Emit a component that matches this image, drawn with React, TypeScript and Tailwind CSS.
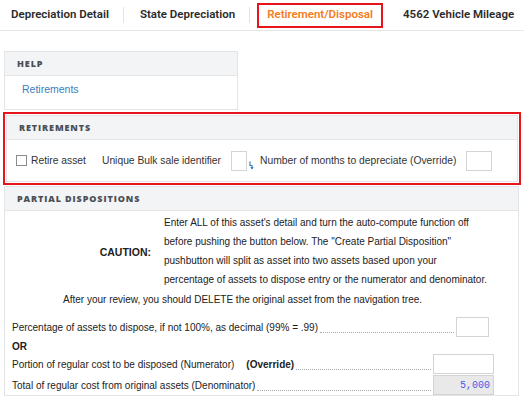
import React from "react";

const arial = { fontFamily: '"Liberation Sans", Arial, sans-serif' };

const PanelHeader = ({ title }: { title: string }) => (
  <div className="flex h-[24px] items-center border-b border-[#e3e4e6] bg-[#f3f4f6] pl-[12px] font-['Open_Sans',sans-serif] text-[9px] font-extrabold tracking-[0.1em] text-[#4a4f55]">
    {title}
  </div>
);

const Leader = () => <div className="mx-[2px] mb-[4px] flex-1 self-end border-b border-dotted border-[#a6abb0]" />;

const Tabs = () => (
  <div className="flex h-[31px] items-center border-b border-[#e6e7e9] font-['Roboto',sans-serif] text-[11.5px] font-semibold text-[#2b2b2b]">
    <span className="pl-[11px]">Depreciation Detail</span>
    <span className="ml-[14px] h-[16px] w-px bg-[#e3e3e3]" />
    <span className="ml-[16px]">State Depreciation</span>
    <span className="ml-[14px] h-[16px] w-px bg-[#e3e3e3]" />
    <span className="ml-[7px] flex h-[25px] items-center border-2 border-[#e8141c] px-[8px] text-[#f47c24]">
      Retirement/Disposal
    </span>
    <span className="ml-[20px]">4562 Vehicle Mileage</span>
  </div>
);

export default function App() {
  return (
    <div className="h-[396px] w-[524px] overflow-hidden bg-white" style={arial}>
      <Tabs />
      <div className="pl-[4px] pr-[4px]">
        <div className="mt-[20px] h-[59px] w-[234px] border border-[#e3e4e6]">
          <PanelHeader title="HELP" />
          <div className="pl-[17px] pt-[6px] text-[10.5px] text-[#3a80c0]">Retirements</div>
        </div>

        <div className="ml-[-1px] mt-[2px] h-[73px] w-[518px] border-2 border-[#e8141c] p-px">
          <div className="h-[67px] border border-[#e3e4e6]">
            <PanelHeader title="RETIREMENTS" />
            <div className="flex h-[41px] items-center text-[10.3px] text-[#333]">
              <span className="ml-[9px] h-[11px] w-[11px] border border-[#8a8a8a] bg-white" />
              <span className="ml-[4px]">Retire asset</span>
              <span className="ml-[16px]">Unique Bulk sale identifier</span>
              <span className="ml-[10px] h-[20px] w-[16px] border border-[#d4d4d4]" />
              <svg className="ml-[2px] mt-[10px]" width="6" height="9" viewBox="0 0 6 9">
                <path d="M1 0.5 V4.5 H3 V8" fill="none" stroke="#3a80c0" strokeWidth="1.2" />
                <path d="M1.3 6 L3 8.6 L4.7 6 Z" fill="#3a80c0" />
              </svg>
              <span className="ml-[5px]">Number of months to depreciate (Override)</span>
              <span className="ml-[10px] h-[20px] w-[26px] border border-[#d4d4d4]" />
            </div>
          </div>
        </div>

        <div className="mt-[1px] w-[515px] border border-[#e3e4e6] text-[10px] text-[#222]">
          <PanelHeader title="PARTIAL DISPOSITIONS" />
          <div className="flex pt-[2px]">
            <div className="flex w-[146px] items-center justify-end pt-[3px] text-[10.5px] font-bold">CAUTION:</div>
            <div className="ml-[13px] leading-[19px]">
              Enter ALL of this asset's detail and turn the auto-compute function off
              <br />
              before pushing the button below. The "Create Partial Disposition"
              <br />
              pushbutton will split as asset into two assets based upon your
              <br />
              percentage of assets to dispose entry or the numerator and denominator.
            </div>
          </div>
          <div className="pl-[58px] pt-[3px]">
            After your review, you should DELETE the original asset from the navigation tree.
          </div>
          <div className="mt-[10px] flex h-[20px] items-center pl-[7px]">
            <span>Percentage of assets to dispose, if not 100%, as decimal (99% = .99)</span>
            <Leader />
            <span className="mr-[29px] h-[20px] w-[33px] border border-[#d4d4d4]" />
          </div>
          <div className="mt-[4px] pl-[7px] font-bold leading-[12px]">OR</div>
          <div className="mt-px flex h-[20px] items-center pl-[7px]">
            <span>Portion of regular cost to be disposed (Numerator)</span>
            <span className="ml-[12px] font-bold">(Override)</span>
            <Leader />
            <span className="mr-[24px] h-[20px] w-[61px] border border-[#d4d4d4]" />
          </div>
          <div className="mt-px flex h-[20px] items-center pl-[7px]">
            <span>Total of regular cost from original assets (Denominator)</span>
            <Leader />
            <span className="mr-[24px] flex h-[20px] w-[61px] items-center justify-end border border-[#d4d4d4] bg-[#e9e9e9] pr-[3px] font-['Liberation_Mono',monospace] text-[10px] text-[#4a5bea]">
              5,000
            </span>
          </div>
        </div>
      </div>
    </div>
  );
}
